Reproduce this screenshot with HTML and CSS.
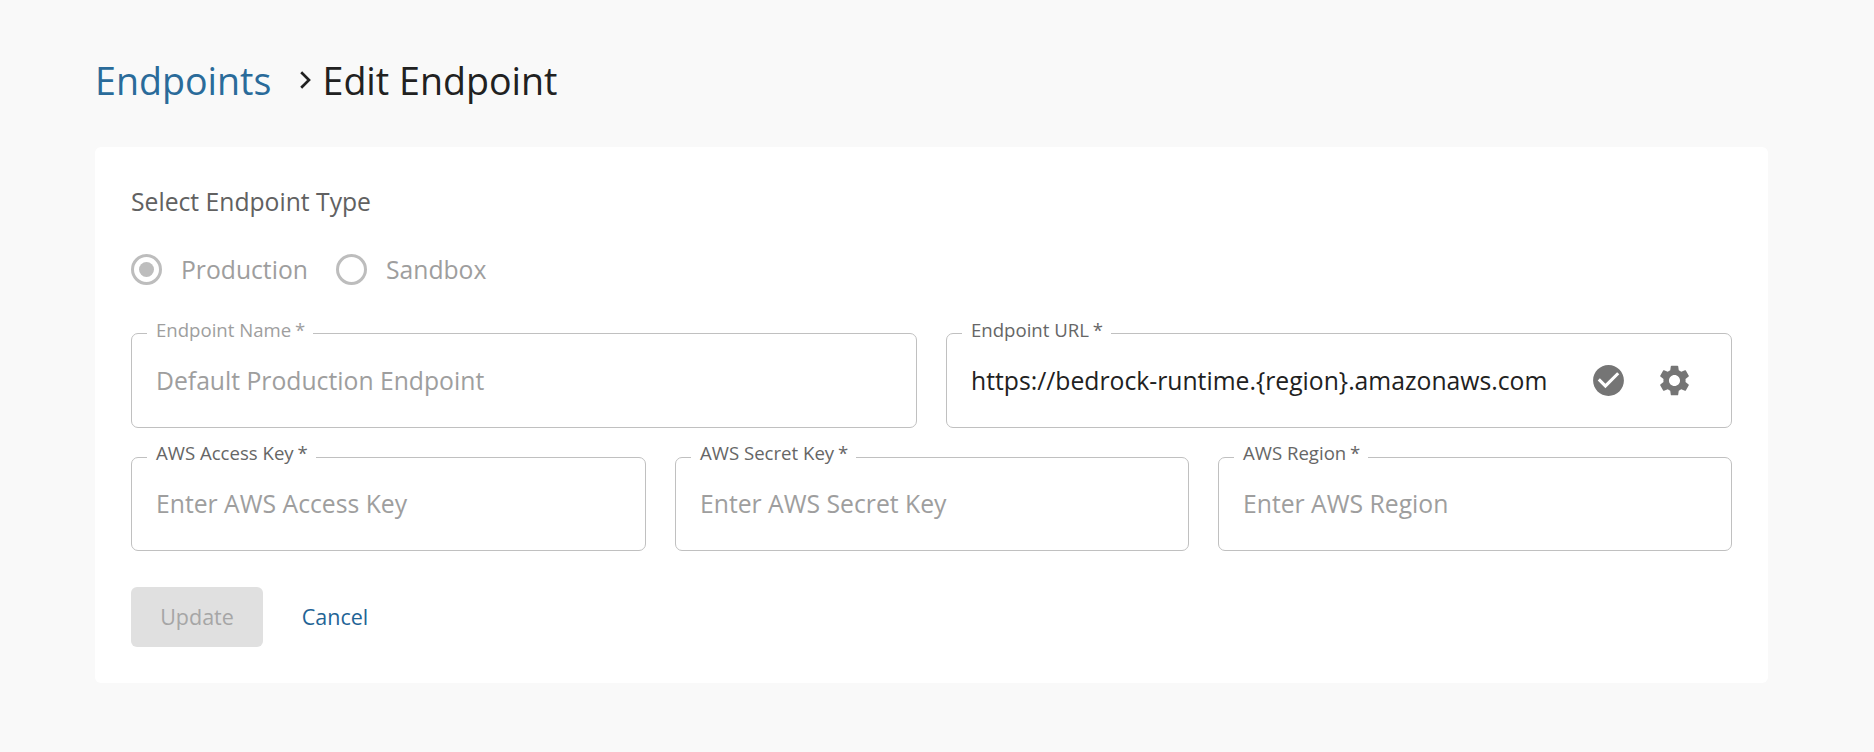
FILE: index.html
```html
<!DOCTYPE html>
<html lang="en">
<head>
<meta charset="utf-8">
<title>Edit Endpoint</title>
<link rel="stylesheet" href="styles.css">
</head>
<body>
<main class="page">
  <h1 class="crumbs">
    <a class="crumb-link">Endpoints</a>
    <svg class="chevron" viewBox="0 0 12 18"><path d="M1.2 1.2 9 9l-7.8 7.8" fill="none" stroke="currentColor" stroke-width="2.7"/></svg>
    <span class="crumb-current">Edit Endpoint</span>
  </h1>
  <section class="card">
    <h2 class="section-title">Select Endpoint Type</h2>
    <div class="radios">
      <div class="radio"><span class="dot checked"></span><span class="radio-text">Production</span></div>
      <div class="radio"><span class="dot"></span><span class="radio-text">Sandbox</span></div>
    </div>
    <div class="row two">
      <div class="field disabled"><label class="label">Endpoint Name<span class="star"> *</span></label><div class="value muted">Default Production Endpoint</div></div>
      <div class="field"><label class="label">Endpoint URL<span class="star"> *</span></label><div class="value">https://bedrock-runtime.{region}.amazonaws.com</div>
        <div class="icons">
          <svg class="icon" viewBox="0 0 24 24"><path d="M12 2C6.48 2 2 6.48 2 12s4.48 10 10 10 10-4.48 10-10S17.52 2 12 2zm-2 15-5-5 1.41-1.41L10 14.17l7.59-7.59L19 8l-9 9z"/></svg>
          <svg class="icon" viewBox="0 0 24 24"><path d="M19.14 12.94c.04-.3.06-.61.06-.94 0-.32-.02-.64-.07-.94l2.03-1.58c.18-.14.23-.41.12-.61l-1.92-3.32c-.12-.22-.37-.29-.59-.22l-2.39.96c-.5-.38-1.03-.7-1.62-.94l-.36-2.54c-.04-.24-.24-.41-.48-.41h-3.84c-.24 0-.43.17-.47.41l-.36 2.54c-.59.24-1.13.57-1.62.94l-2.39-.96c-.22-.08-.47 0-.59.22L2.74 8.87c-.12.21-.08.47.12.61l2.03 1.58c-.05.3-.09.63-.09.94s.02.64.07.94l-2.03 1.58c-.18.14-.23.41-.12.61l1.92 3.32c.12.22.37.29.59.22l2.39-.96c.5.38 1.03.7 1.62.94l.36 2.54c.05.24.24.41.48.41h3.84c.24 0 .44-.17.47-.41l.36-2.54c.59-.24 1.13-.56 1.62-.94l2.39.96c.22.08.47 0 .59-.22l1.92-3.32c.12-.22.07-.47-.12-.61l-2.01-1.58zM12 15.6c-1.98 0-3.6-1.62-3.6-3.6s1.62-3.6 3.6-3.6 3.6 1.62 3.6 3.6-1.62 3.6-3.6 3.6z"/></svg>
        </div>
      </div>
    </div>
    <div class="row three">
      <div class="field"><label class="label">AWS Access Key<span class="star"> *</span></label><div class="value muted">Enter AWS Access Key</div></div>
      <div class="field"><label class="label">AWS Secret Key<span class="star"> *</span></label><div class="value muted">Enter AWS Secret Key</div></div>
      <div class="field"><label class="label">AWS Region<span class="star"> *</span></label><div class="value muted">Enter AWS Region</div></div>
    </div>
    <div class="actions">
      <button class="btn update" disabled>Update</button>
      <button class="btn cancel">Cancel</button>
    </div>
  </section>
</main>
</body>
</html>
```
FILE: styles.css
```css
* { box-sizing: border-box; }
body {
  margin: 0;
  background: #f9f9f9;
  color: #212121;
  font-family: "Open Sans", "Noto Sans", sans-serif;
}
.page { padding: 55px 106px 0 95px; }
.crumbs {
  display: flex;
  align-items: center;
  height: 52px;
  margin: 0 0 40px;
  font-size: 37.6px;
  font-weight: 400;
  line-height: 52px;
  white-space: nowrap;
}
.crumb-link { width: 204px; color: #2a6b9a; }
.chevron { width: 12px; height: 18px; margin: 0 11px 2px 0.5px; }
.card {
  height: 536px;
  padding: 36px;
  background: #fff;
  border-radius: 6px;
}
.section-title {
  margin: 0;
  color: #616161;
  font-size: 24.7px;
  font-weight: 400;
  line-height: 38px;
}
.radios { display: flex; height: 31px; margin-top: 33px; }
.radio { display: flex; align-items: center; width: 205px; gap: 19px; }
.dot {
  flex: none;
  display: grid;
  place-items: center;
  width: 31px;
  height: 31px;
  border: 3px solid #bdbdbd;
  border-radius: 50%;
}
.checked::after {
  content: "";
  width: 15px;
  height: 15px;
  border-radius: 50%;
  background: #bdbdbd;
}
.radio-text { color: #9e9e9e; font-size: 24.7px; line-height: 31px; }
.row { display: grid; column-gap: 29px; }
.two { grid-template-columns: 1fr 1fr; margin-top: 48px; }
.three { grid-template-columns: 515fr 514fr 514fr; margin-top: 29px; }
.field {
  position: relative;
  display: flex;
  align-items: center;
  justify-content: space-between;
  height: 95px;
  padding: 0 38px 0 24px;
  border: 1px solid #c0c0c0;
  border-radius: 7px;
}
.three .field { height: 94px; padding-bottom: 1px; }
.label {
  position: absolute;
  top: -17px;
  left: 15px;
  padding: 0 8px 0 9px;
  background: #fff;
  color: #666;
  font-size: 18.6px;
  line-height: 25px;
  white-space: nowrap;
}
.star { word-spacing: -1px; }
.three .label { top: -18px; }
.disabled .label { color: #9e9e9e; }
.value { font-size: 24.72px; line-height: 34px; white-space: nowrap; }
.muted { color: #9e9e9e; }
.icons { display: flex; gap: 29px; }
.icon { width: 37px; height: 37px; fill: #757575; }
.actions { display: flex; margin-top: 36px; }
.btn {
  height: 60px;
  padding: 0;
  border: 0;
  border-radius: 6px;
  font: 400 21.5px/60px "Open Sans", "Noto Sans", sans-serif;
}
.update { width: 132px; background: #e0e0e0; color: #a6a6a6; }
.cancel { width: 144px; background: none; color: #1f6496; }
```
